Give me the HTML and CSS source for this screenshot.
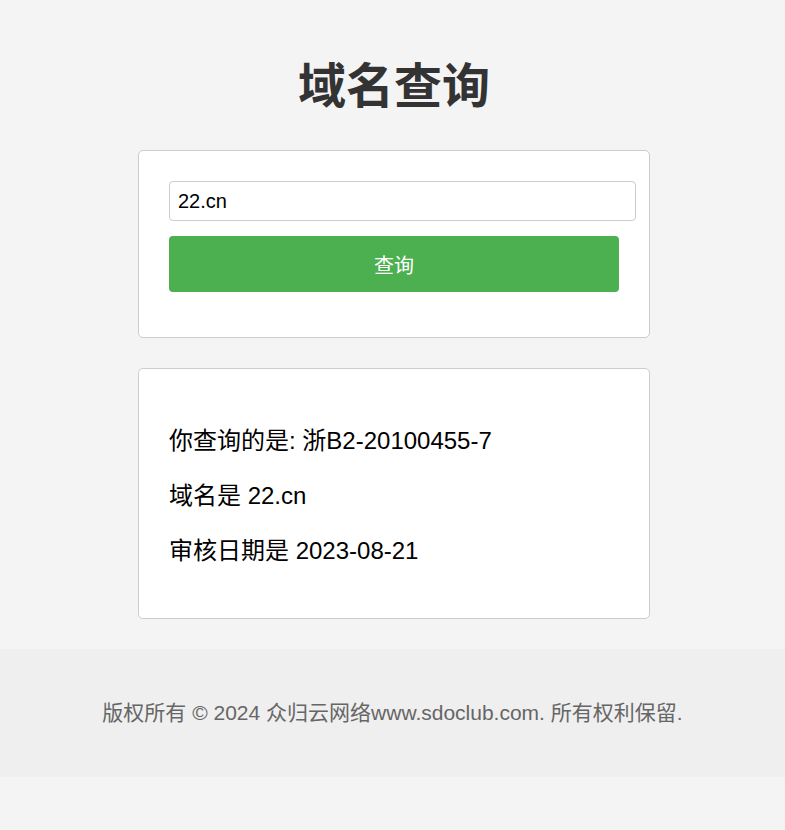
FILE: index.html
```html
<!DOCTYPE html>
<html lang="zh-CN">
<head>
<meta charset="utf-8">
<title>域名查询</title>
<link rel="stylesheet" href="styles.css">
</head>
<body>
<main class="page">
  <h1 class="title">域名查询</h1>
  <section class="card card-form">
    <form class="query-form">
      <input class="query-input" type="text" value="22.cn">
      <button class="query-btn" type="button">查询</button>
    </form>
  </section>
  <section class="card card-result">
    <p class="result-line">你查询的是: 浙B2-20100455-7</p>
    <p class="result-line">域名是 22.cn</p>
    <p class="result-line">审核日期是 2023-08-21</p>
  </section>
</main>
<footer class="footer">
  <p class="footer-text">版权所有 © 2024 众归云网络www.sdoclub.com. 所有权利保留.</p>
</footer>
</body>
</html>
```
FILE: styles.css
```css
html, body {
  margin: 0;
  padding: 0;
}
body {
  background: #f4f4f4;
  font-family: "Liberation Sans", Arial, "Noto Sans CJK SC", sans-serif;
  color: #000;
}
.page {
  display: flex;
  flex-direction: column;
  align-items: center;
  padding-left: 3px;
}
.title {
  font-size: 48px;
  font-weight: bold;
  color: #333;
  line-height: 64px;
  margin: 55px 0 31px;
  text-align: center;
}
.card {
  width: 450px;
  background: #fff;
  border: 1px solid #ccc;
  border-radius: 5px;
  padding: 30px;
  margin-bottom: 30px;
}
.card-form {
  padding-bottom: 45px;
}
.query-form {
  display: flex;
  flex-direction: column;
  align-items: flex-start;
  gap: 15px;
  margin: 0;
}
.query-input {
  width: 467px;
  height: 40px;
  box-sizing: border-box;
  padding: 0 8px;
  border: 1px solid #ccc;
  border-radius: 4px;
  font-family: "Liberation Sans", Arial, sans-serif;
  font-size: 20px;
  color: #000;
  background: #fff;
  margin: 0;
}
.query-btn {
  width: 450px;
  height: 56px;
  border: none;
  border-radius: 4px;
  background: #4caf50;
  color: #fff;
  font-family: "Liberation Sans", Arial, "Noto Sans CJK SC", sans-serif;
  font-size: 20px;
  margin: 0;
  padding: 0;
}
.card-result {
  padding-top: 32px;
  padding-bottom: 28px;
}
.result-line {
  font-size: 24px;
  line-height: 31px;
  margin: 24px 0;
}
.footer {
  background: #efefef;
  padding: 50px 0;
  text-align: center;
}
.footer-text {
  margin: 0;
  font-size: 21px;
  line-height: 28px;
  color: #666;
}
```
